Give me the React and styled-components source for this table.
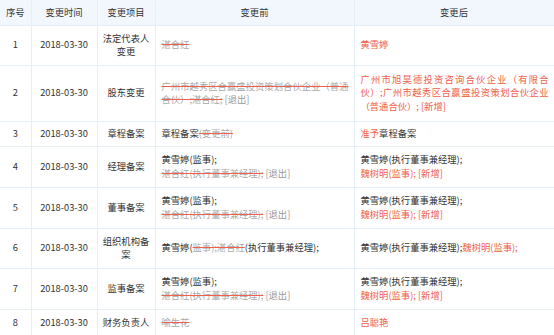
import React from 'react';
import styled, { createGlobalStyle } from 'styled-components';

const GlobalStyle = createGlobalStyle`
  body {
    margin: 0;
    background: #fff;
    font-family: "Noto Sans CJK SC", "Noto Sans", sans-serif;
  }
`;

const rows = [
  {
    no: 1, date: '2018-03-30', item: '法定代表人变更', h: 40,
    before: [['del', '湛合红']],
    after: [['new', '黄雪婷']],
  },
  {
    no: 2, date: '2018-03-30', item: '股东变更', h: 56,
    before: [['del', '广州市越秀区合赢盛投资策划合伙企业（普通合伙）;湛合红;'], ['note', ' [退出]']],
    after: [['new', '广州市旭昊德投资咨询合伙企业（有限合伙）;广州市越秀区合赢盛投资策划合伙企业（普通合伙）; [新增]']],
  },
  {
    no: 3, date: '2018-03-30', item: '章程备案', h: 25,
    before: [['txt', '章程备案'], ['del', '(变更前)']],
    after: [['new', '准予'], ['txt', '章程备案']],
  },
  {
    no: 4, date: '2018-03-30', item: '经理备案', h: 41,
    before: [['txt', '黄雪婷(监事);'], ['br'], ['del', '湛合红(执行董事兼经理);'], ['note', ' [退出]']],
    after: [['txt', '黄雪婷(执行董事兼经理);'], ['br'], ['new', '魏树明(监事); [新增]']],
  },
  {
    no: 5, date: '2018-03-30', item: '董事备案', h: 41,
    before: [['txt', '黄雪婷(监事);'], ['br'], ['del', '湛合红(执行董事兼经理);'], ['note', ' [退出]']],
    after: [['txt', '黄雪婷(执行董事兼经理);'], ['br'], ['new', '魏树明(监事); [新增]']],
  },
  {
    no: 6, date: '2018-03-30', item: '组织机构备案', h: 40,
    before: [['txt', '黄雪婷('], ['del', '监事);湛合红'], ['txt', '(执行董事兼经理);']],
    after: [['txt', '黄雪婷(执行董事兼经理);'], ['new', '魏树明(监事);']],
  },
  {
    no: 7, date: '2018-03-30', item: '监事备案', h: 41,
    before: [['txt', '黄雪婷(监事);'], ['br'], ['del', '湛合红(执行董事兼经理);'], ['note', ' [退出]']],
    after: [['txt', '黄雪婷(执行董事兼经理);'], ['br'], ['new', '魏树明(监事); [新增]']],
  },
  {
    no: 8, date: '2018-03-30', item: '财务负责人', h: 27,
    before: [['del', '喻生花']],
    after: [['new', '吕聪艳']],
  },
];

function Rich({ parts }) {
  return parts.map(([kind, text], i) => {
    if (kind === 'br') return <br key={i} />;
    if (kind === 'del') return <Del key={i}>{text}</Del>;
    if (kind === 'new') return <New key={i}>{text}</New>;
    if (kind === 'note') return <Note key={i}>{text}</Note>;
    return <React.Fragment key={i}>{text}</React.Fragment>;
  });
}

export default function App() {
  return (
    <>
      <GlobalStyle />
      <Table>
        <colgroup>
          <col style={{ width: 31 }} />
          <col style={{ width: 66 }} />
          <col style={{ width: 58 }} />
          <col style={{ width: 199 }} />
          <col style={{ width: 200 }} />
        </colgroup>
        <thead>
          <Row $h={25}>
            <Head>序号</Head>
            <Head>变更时间</Head>
            <Head>变更项目</Head>
            <Head>变更前</Head>
            <Head>变更后</Head>
          </Row>
        </thead>
        <tbody>
          {rows.map((r) => (
            <Row key={r.no} $h={r.h}>
              <Cell $center>{r.no}</Cell>
              <Cell $center>{r.date}</Cell>
              <Cell $center>{r.item}</Cell>
              <Cell><Rich parts={r.before} /></Cell>
              <Cell><Rich parts={r.after} /></Cell>
            </Row>
          ))}
        </tbody>
      </Table>
    </>
  );
}

const Table = styled.table`
  width: 554px;
  table-layout: fixed;
  border-collapse: collapse;
  font-size: 9.3px;
  line-height: 13.3px;
  color: #333;
`;

const Row = styled.tr`
  height: ${(p) => p.$h}px;
`;

const Head = styled.th`
  background: #f2f7fd;
  font-weight: normal;
  text-align: center;
  padding: 0 3px;
  border: 1px solid #e6eef8;
  border-left: none;
  border-top: none;
`;

const Cell = styled.td`
  padding: ${(p) => (p.$center ? '0 3px' : '0 5px 0 6px')};
  vertical-align: middle;
  text-align: ${(p) => (p.$center ? 'center' : 'justify')};
  border: 1px solid #e6eef8;
  border-left: none;
  word-break: break-all;
`;

const Del = styled.span`
  color: #a9a9a9;
  text-decoration: line-through;
  text-decoration-color: #f0604c;
`;

const New = styled.span`
  color: #f0604c;
`;

const Note = styled.span`
  color: #999;
`;
